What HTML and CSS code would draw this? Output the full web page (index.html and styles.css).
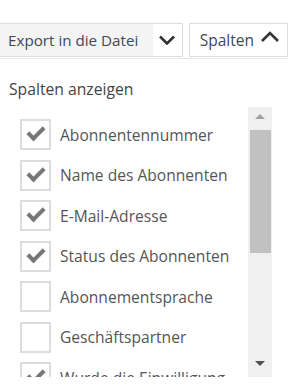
FILE: index.html
```html
<!DOCTYPE html>
<html lang="de">
<head>
    <meta charset="UTF-8">
    <title>Spalten</title>
    <link rel="stylesheet" href="styles.css">
</head>
<body>
    <div class="toolbar">
        <div class="export-btn">
            <span class="export-label">Export in die Datei</span>
            <span class="export-arrow">
                <svg width="18" height="10" viewBox="0 0 18 10"><path d="M2 1.5 L9 8.5 L16 1.5" fill="none" stroke="#333" stroke-width="2.6"/></svg>
            </span>
        </div>
        <div class="columns-btn">
            <span>Spalten</span>
            <svg width="20" height="12" viewBox="0 0 20 12"><path d="M2 10 L10 2 L18 10" fill="none" stroke="#333" stroke-width="2.6"/></svg>
        </div>
    </div>

    <div class="panel">
        <div class="panel-title">Spalten anzeigen</div>
        <div class="list-wrap">
            <ul class="column-list">
                <li class="checked"><span class="box"></span>Abonnentennummer</li>
                <li class="checked"><span class="box"></span>Name des Abonnenten</li>
                <li class="checked"><span class="box"></span>E-Mail-Adresse</li>
                <li class="checked"><span class="box"></span>Status des Abonnenten</li>
                <li><span class="box"></span>Abonnementsprache</li>
                <li><span class="box"></span>Geschäftspartner</li>
                <li class="checked"><span class="box"></span>Wurde die Einwilligung</li>
            </ul>
            <div class="scrollbar">
                <span class="arrow-up"></span>
                <span class="thumb"></span>
                <span class="arrow-down"></span>
            </div>
        </div>
    </div>
</body>
</html>
```

FILE: styles.css
```css
body {
    margin: 0;
    font-family: 'Open Sans', 'Liberation Sans', sans-serif;
    color: #555;
    background: #fff;
    width: 288px;
    height: 388px;
    overflow: hidden;
}
.toolbar {
    display: flex;
    margin-top: 23px;
    padding-bottom: 1px;
    border-bottom: 1px solid #e6e6e6;
    height: 34px;
}
.export-btn {
    display: flex;
    margin-left: -1px;
    border: 1px solid #ddd;
    width: 185px;
    box-sizing: border-box;
}
.export-label {
    background: #f4f4f4;
    width: 145px;
    padding-left: 8px;
    font-size: 15.2px;
    line-height: 32px;
    color: #404858;
    white-space: nowrap;
}
.export-arrow {
    flex: 1;
    display: flex;
    align-items: center;
    justify-content: center;
}
.columns-btn {
    display: flex;
    align-items: center;
    margin-left: 6px;
    border: 1px solid #ddd;
    height: 34px;
    box-sizing: border-box;
    width: 100px;
    padding-left: 10px;
    font-size: 15.5px;
    color: #404858;
    white-space: nowrap;
}
.columns-btn svg {
    margin-left: 6px;
    margin-top: -6px;
}
.panel {
    padding: 20px 0 0 9px;
}
.panel-title {
    font-size: 15.7px;
    line-height: 20px;
    color: #444;
}
.list-wrap {
    display: flex;
    margin-top: 8px;
    height: 270px;
    width: 263px;
}
.column-list {
    list-style: none;
    margin: 0;
    padding: 12px 0 0 11px;
    flex: 1;
    overflow: hidden;
}
.column-list li {
    display: flex;
    align-items: center;
    height: 31px;
    margin-bottom: 9.5px;
    font-size: 15.6px;
    color: #555;
    white-space: nowrap;
}
.box {
    width: 31px;
    height: 31px;
    box-sizing: border-box;
    border: 2px solid #ddd;
    margin-right: 9px;
    flex-shrink: 0;
    display: flex;
    align-items: center;
    justify-content: center;
}
.checked .box::after {
    content: "";
    width: 6px;
    height: 13px;
    border-right: 4px solid #777;
    border-bottom: 4px solid #777;
    transform: rotate(45deg) translate(-2px, -2px);
}
.scrollbar {
    width: 24px;
    background: #f0f0f0;
    display: flex;
    flex-direction: column;
    align-items: center;
}
.arrow-up {
    margin-top: 7px;
    border-left: 5px solid transparent;
    border-right: 5px solid transparent;
    border-bottom: 5px solid #a3a3a3;
}
.thumb {
    margin-top: 11px;
    width: 21px;
    height: 123px;
    background: #c1c1c1;
}
.arrow-down {
    margin-top: auto;
    margin-bottom: 11px;
    border-left: 5px solid transparent;
    border-right: 5px solid transparent;
    border-top: 5px solid #505050;
}
```
